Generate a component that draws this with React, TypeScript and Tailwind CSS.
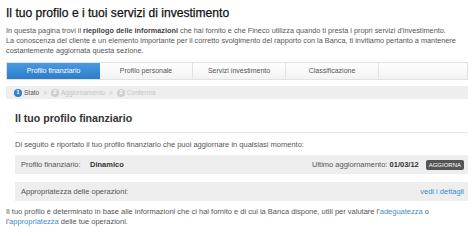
import React from 'react';

const tabs = ['Profilo finanziario', 'Profilo personale', 'Servizi investimento', 'Classificazione'];

const Step: React.FC<{ n: number; label: string; active?: boolean }> = ({ n, label, active }) => (
  <span className={`flex items-center gap-[2px] ${active ? 'text-[#555]' : 'text-[#c4c4c4]'}`}>
    <span
      className={`flex h-[8px] w-[8px] items-center justify-center rounded-full text-[6px] font-bold text-white ${active ? 'bg-[#2f7fc9]' : 'bg-[#cfcfcf]'}`}
    >
      {n}
    </span>
    {label}
  </span>
);

export default function App() {
  return (
    <div className="h-[236px] w-[474px] overflow-hidden bg-white pl-[6px] pr-[6px] font-['Liberation_Sans',Arial,sans-serif] text-[#555]">
      <h1 className="pt-[4px] text-[12.1px] leading-[18px] text-[#111] [-webkit-text-stroke:0.25px_#111]">
        Il tuo profilo e i tuoi servizi di investimento
      </h1>
      <p className="mt-[4px] whitespace-nowrap text-[7.3px] leading-[10px]">
        In questa pagina trovi il <b className="text-[#444]">riepilogo delle informazioni</b> che hai fornito e che Fineco
        utilizza quando ti presta i propri servizi d'investimento.
        <br />
        La conoscenza del cliente è un elemento importante per il corretto svolgimento del rapporto con la Banca, ti
        invitiamo pertanto a mantenere
        <br />
        costantemente aggiornata questa sezione.
      </p>

      <div className="mt-[6px] flex h-[18px] border border-[#e2e2e2] bg-gradient-to-b from-white to-[#f3f3f3] text-[7px]">
        {tabs.map((t, i) => (
          <div
            key={t}
            className={`flex w-[93px] items-center justify-center ${
              i === 0 ? 'bg-gradient-to-b from-[#4a9ae0] to-[#2c7cca] text-white' : 'border-r border-[#e2e2e2] text-[#555]'
            }`}
          >
            {t}
          </div>
        ))}
        <div className="flex-1" />
      </div>

      <div className="mt-[6px] flex h-[13px] items-center gap-[4px] bg-[#eeeeee] pl-[8px] text-[6.5px]">
        <Step n={1} label="Stato" active />
        <span className="text-[#c4c4c4]">&gt;</span>
        <Step n={2} label="Aggiornamento" />
        <span className="text-[#c4c4c4]">&gt;</span>
        <Step n={3} label="Conferma" />
      </div>

      <div className="pl-[9px]">
        <h2 className="mt-[12px] text-[10.6px] font-bold leading-[14px] text-[#333]">Il tuo profilo finanziario</h2>
        <div className="mt-[7px] h-px bg-[#e6e6e6]" />
        <p className="mt-[7px] text-[7.5px] leading-[10px]">
          Di seguito è riportato il tuo profilo finanziario che puoi aggiornare in qualsiasi momento:
        </p>

        <div className="mt-[5px] flex h-[19px] items-center bg-[#eeeeee] pl-[6px] pr-[4px] text-[7.5px]">
          <span className="flex w-[291px]">
            <span className="w-[69px]">Profilo finanziario:</span>
            <b className="text-[#333]">Dinamico</b>
          </span>
          <span>
            Ultimo aggiornamento: <b className="text-[#333]">01/03/12</b>
          </span>
          <span className="ml-auto rounded-[2px] bg-[#555] px-[3px] py-[1px] text-[6px] leading-[8px] text-white">
            AGGIORNA
          </span>
        </div>

        <div className="mt-[8px] flex h-[19px] items-center bg-[#eeeeee] pl-[6px] pr-[4px] text-[7.5px]">
          <span>Appropriatezza delle operazioni:</span>
          <span className="ml-auto text-[#3a8cd0]">vedi i dettagli</span>
        </div>
      </div>

      <p className="mt-[6px] text-[7.5px] leading-[10px]">
        Il tuo profilo è determinato in base alle informazioni che ci hai fornito e di cui la Banca dispone, utili per
        valutare l'<span className="text-[#3a8cd0]">adeguatezza</span> o
        <br />
        l'<span className="text-[#3a8cd0]">appropriatezza</span> delle tue operazioni.
      </p>
    </div>
  );
}
